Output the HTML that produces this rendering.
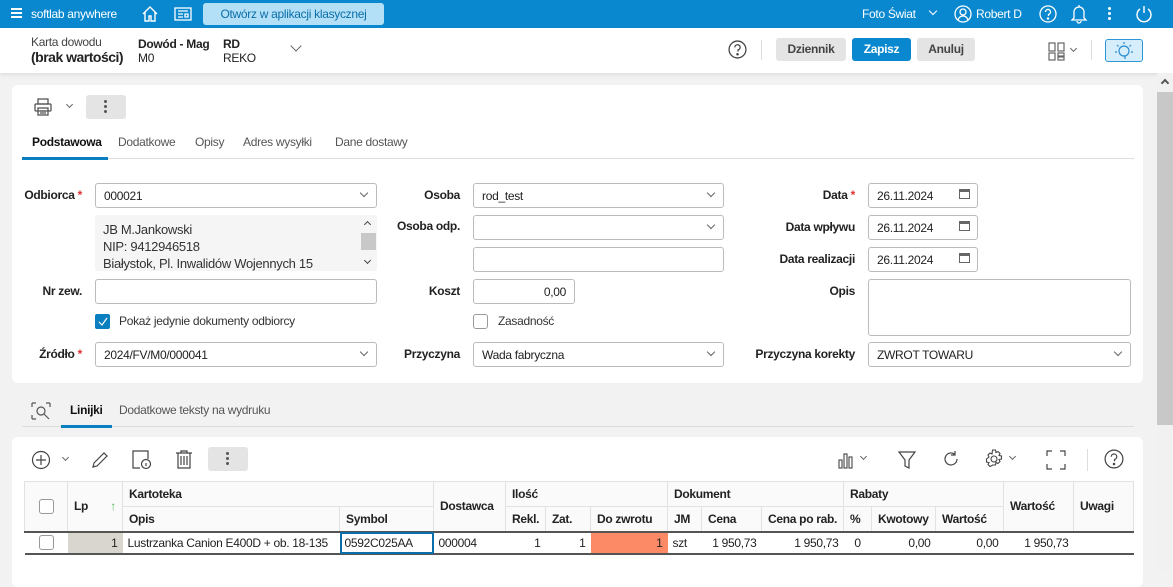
<!DOCTYPE html>
<html><head><meta charset="utf-8"><style>
*{box-sizing:border-box;margin:0;padding:0}
body{width:1173px;height:571px;overflow:hidden;background:#f2f2f2;font-family:"Liberation Sans",sans-serif;font-size:12px;letter-spacing:-0.3px;color:#222;position:relative;white-space:nowrap}
.a{position:absolute}
.top{left:0;top:0;width:1173px;height:28px;background:#0a88cf;color:#fff}
.hdr{left:0;top:28px;width:1173px;height:45px;background:#fff;box-shadow:0 2px 4px rgba(0,0,0,.08)}
.card{background:#fff;border-radius:6px}
.inp{border:1px solid #bbb;border-radius:3px;background:#fff;height:25px;padding:5px 8px;font-size:12px}
.lbl{font-weight:bold;text-align:right;font-size:12px}
.req{color:#d33}
.chev{position:absolute;right:9px;top:6px;width:6px;height:6px;border-right:1px solid #666;border-bottom:1px solid #666;transform:rotate(45deg)}
.btn{border-radius:3px;font-weight:bold;text-align:center;height:23px;line-height:23px;font-size:12px}
.tab{font-size:12px;color:#555}
table{border-collapse:collapse;position:absolute;left:24px;top:481px;font-size:12px;table-layout:fixed;width:1109px}
td,th{border:1px solid #e2e2e2;height:25px;padding:0 6px;text-align:left;font-weight:bold;background:#fafafa;overflow:hidden}
tr.r td{background:#fff;font-weight:normal;height:22px;border:none;border-top:2px solid #555;border-bottom:2px solid #555;padding:0 5px}
.cb{width:15px;height:15px;border:1px solid #999;border-radius:3px;background:#fff;display:inline-block;vertical-align:middle}
</style></head><body>
<div class="a top">
 <div class="a" style="left:11px;top:8px;width:11px;height:2px;background:#fff;box-shadow:0 4px 0 #fff,0 8px 0 #fff"></div>
 <div class="a" style="left:31px;top:7px;font-size:12px">softlab anywhere</div>
 <svg class="a" style="left:140px;top:4px" width="20" height="20" viewBox="0 0 20 20" fill="none" stroke="#fff" stroke-width="1.4"><path d="M3 10L10 3l7 7M5 8v9h4v-5h2v5h4V8"/></svg>
 <svg class="a" style="left:174px;top:6px" width="18" height="16" viewBox="0 0 18 16" fill="none" stroke="#fff" stroke-width="1.3"><rect x="1" y="2" width="16" height="12"/><path d="M4 5h10M4 8h5M4 11h5M11 8h3v3h-3z"/></svg>
 <div class="a" style="left:203px;top:3px;width:181px;height:22px;background:#b3e0f7;border-radius:3px;color:#0a6fa8;text-align:center;line-height:22px;font-size:12px">Otwórz w aplikacji klasycznej</div>
 <div class="a" style="left:862px;top:7px">Foto Świat</div>
 <div class="a" style="left:930px;top:8px;width:6px;height:6px;border-right:1px solid #fff;border-bottom:1px solid #fff;transform:rotate(45deg)"></div>
 <svg class="a" style="left:954px;top:5px" width="18" height="18" viewBox="0 0 18 18" fill="none" stroke="#fff" stroke-width="1.3"><circle cx="9" cy="9" r="8"/><circle cx="9" cy="7" r="3"/><path d="M4 15c1-3 3-4 5-4s4 1 5 4"/></svg>
 <div class="a" style="left:976px;top:7px">Robert D</div>
 <svg class="a" style="left:1039px;top:5px" width="18" height="18" viewBox="0 0 18 18" fill="none" stroke="#fff" stroke-width="1.3"><circle cx="9" cy="9" r="8"/><path d="M6.5 7a2.5 2.5 0 1 1 3 2.4V11"/><circle cx="9" cy="13.5" r=".6" fill="#fff"/></svg>
 <svg class="a" style="left:1070px;top:4px" width="18" height="20" viewBox="0 0 18 20" fill="none" stroke="#fff" stroke-width="1.3"><path d="M4 14V8a5 5 0 0 1 10 0v6l2 2H2zM7 17a2 2 0 0 0 4 0M9 1v2"/></svg>
 <div class="a" style="left:1108px;top:7px;width:3px;height:3px;background:#fff;border-radius:2px;box-shadow:0 5px 0 #fff,0 10px 0 #fff"></div>
 <svg class="a" style="left:1135px;top:5px" width="18" height="18" viewBox="0 0 18 18" fill="none" stroke="#fff" stroke-width="1.4"><path d="M5 4a7 7 0 1 0 8 0M9 1v7"/></svg>
</div>
<div class="a hdr">
 <div class="a" style="left:31px;top:7px;font-size:12px;color:#444">Karta dowodu</div>
 <div class="a" style="left:31px;top:21px;font-size:14px;font-weight:bold;letter-spacing:-0.5px">(brak wartości)</div>
 <div class="a" style="left:138px;top:9px;font-weight:bold">Dowód - Mag</div>
 <div class="a" style="left:138px;top:23px">M0</div>
 <div class="a" style="left:223px;top:9px;font-weight:bold">RD</div>
 <div class="a" style="left:223px;top:23px">REKO</div>
 <div class="chev" style="left:292px;top:14px;width:8px;height:8px"></div>
 <svg class="a" style="left:728px;top:12px" width="19" height="19" viewBox="0 0 18 18" fill="none" stroke="#444" stroke-width="1.2"><circle cx="9" cy="9" r="8"/><path d="M6.5 7a2.5 2.5 0 1 1 3 2.4V11"/><circle cx="9" cy="13.5" r=".6" fill="#444"/></svg>
 <div class="a" style="left:761px;top:12px;width:1px;height:20px;background:#ddd"></div>
 <div class="a btn" style="left:776px;top:10px;width:70px;background:#e4e4e4;color:#444">Dziennik</div>
 <div class="a btn" style="left:852px;top:10px;width:59px;background:#0a88cf;color:#fff">Zapisz</div>
 <div class="a btn" style="left:917px;top:10px;width:58px;background:#e4e4e4;color:#444">Anuluj</div>
 <svg class="a" style="left:1048px;top:14px" width="18" height="20" viewBox="0 0 18 20" fill="none" stroke="#666" stroke-width="1.2"><rect x="1" y="1" width="6" height="8"/><rect x="10" y="1" width="6" height="8"/><rect x="1" y="11" width="6" height="7"/><rect x="10" y="11" width="6" height="3"/><rect x="10" y="15" width="6" height="3"/></svg>
 <div class="chev" style="left:1071px;top:18px;width:5px;height:5px"></div>
 <div class="a" style="left:1091px;top:12px;width:1px;height:20px;background:#ddd"></div>
 <div class="a" style="left:1105px;top:11px;width:38px;height:23px;border:1px solid #2a96d4;background:#d6eefb;border-radius:3px"></div>
 <svg class="a" style="left:1114px;top:13px" width="20" height="20" viewBox="0 0 20 20" fill="none" stroke="#2a8ccc" stroke-width="1.2"><circle cx="10" cy="10" r="5"/><path d="M10 1v2M3 4l1.5 1.5M17 4l-1.5 1.5M1 11h2M17 11h2M9 15h2v3"/></svg>
</div>
<div class="a" style="left:1157px;top:73px;width:16px;height:498px;background:#f1f1f1"></div>
<div class="a" style="left:1157px;top:92px;width:16px;height:333px;background:#c8c8c8"></div>
<div class="a" style="left:1162px;top:80px;width:6px;height:6px;border-left:2px solid #555;border-top:2px solid #555;transform:rotate(45deg)"></div>

<div class="a card" style="left:12px;top:85px;width:1131px;height:298px">
 <svg class="a" style="left:21px;top:12px" width="20" height="20" viewBox="0 0 20 20" fill="none" stroke="#555" stroke-width="1.3"><rect x="5" y="2" width="10" height="5"/><rect x="2" y="7" width="16" height="7" rx="1"/><rect x="5" y="11" width="10" height="7"/><path d="M7 14h6M7 16h6"/></svg>
 <div class="chev" style="left:55px;top:17px;width:5px;height:5px"></div>
 <div class="a" style="left:74px;top:10px;width:40px;height:24px;background:#e4e4e4;border-radius:3px"></div>
 <div class="a" style="left:92px;top:15px;width:3px;height:3px;background:#555;border-radius:2px;box-shadow:0 5px 0 #555,0 10px 0 #555"></div>
 <div class="a tab" style="left:20px;top:50px;color:#111;font-weight:bold">Podstawowa</div>
 <div class="a tab" style="left:106px;top:50px">Dodatkowe</div>
 <div class="a tab" style="left:183px;top:50px">Opisy</div>
 <div class="a tab" style="left:231px;top:50px">Adres wysyłki</div>
 <div class="a tab" style="left:323px;top:50px">Dane dostawy</div>
 <div class="a" style="left:10px;top:73px;width:1112px;height:1px;background:#ddd"></div>
 <div class="a" style="left:10px;top:72px;width:86px;height:3px;background:#0a7fc0"></div>

 <div class="a lbl" style="left:0;top:103px;width:70px">Odbiorca <span class="req">*</span></div>
 <div class="a inp" style="left:83px;top:98px;width:282px">000021<div class="chev"></div></div>
 <div class="a" style="left:83px;top:130px;width:282px;height:56px;background:#f5f5f5;border-radius:3px;padding:6px 8px;line-height:17px;font-size:13px;color:#333">JB M.Jankowski<br>NIP: 9412946518<br>Białystok, Pl. Inwalidów Wojennych 15</div>
 <div class="a" style="left:349px;top:148px;width:15px;height:17px;background:#c8c8c8"></div>
 <div class="a" style="left:353px;top:137px;width:5px;height:5px;border-left:1.5px solid #444;border-top:1.5px solid #444;transform:rotate(45deg)"></div>
 <div class="a" style="left:353px;top:173px;width:5px;height:5px;border-right:1.5px solid #444;border-bottom:1.5px solid #444;transform:rotate(45deg)"></div>
 <div class="a lbl" style="left:0;top:199px;width:70px">Nr zew.</div>
 <div class="a inp" style="left:83px;top:194px;width:282px"></div>
 <div class="a" style="left:83px;top:229px;width:15px;height:15px;background:#0a7fc0;border-radius:2px"></div>
 <svg class="a" style="left:86px;top:232px" width="10" height="9"><path d="M1 5l3 3 5-7" stroke="#fff" fill="none" stroke-width="1.2"/></svg>
 <div class="a" style="left:107px;top:229px;color:#333">Pokaż jedynie dokumenty odbiorcy</div>
 <div class="a lbl" style="left:0;top:262px;width:70px">Źródło <span class="req">*</span></div>
 <div class="a inp" style="left:83px;top:257px;width:282px">2024/FV/M0/000041<div class="chev"></div></div>

 <div class="a lbl" style="left:350px;top:103px;width:98px">Osoba</div>
 <div class="a inp" style="left:461px;top:98px;width:251px">rod_test<div class="chev"></div></div>
 <div class="a lbl" style="left:350px;top:134px;width:98px">Osoba odp.</div>
 <div class="a inp" style="left:461px;top:130px;width:251px"><div class="chev"></div></div>
 <div class="a inp" style="left:461px;top:162px;width:251px"></div>
 <div class="a lbl" style="left:350px;top:199px;width:98px">Koszt</div>
 <div class="a inp" style="left:461px;top:194px;width:102px;text-align:right">0,00</div>
 <div class="a" style="left:461px;top:229px;width:15px;height:15px;border:1px solid #999;border-radius:3px"></div>
 <div class="a" style="left:486px;top:229px;color:#333">Zasadność</div>
 <div class="a lbl" style="left:350px;top:262px;width:98px">Przyczyna</div>
 <div class="a inp" style="left:461px;top:257px;width:251px">Wada fabryczna<div class="chev"></div></div>

 <div class="a lbl" style="left:700px;top:103px;width:143px">Data <span class="req">*</span></div>
 <div class="a lbl" style="left:700px;top:135px;width:143px">Data wpływu</div>
 <div class="a lbl" style="left:700px;top:167px;width:143px">Data realizacji</div>
 <div class="a inp" style="left:856px;top:98px;width:110px">26.11.2024</div>
 <div class="a inp" style="left:856px;top:130px;width:110px">26.11.2024</div>
 <div class="a inp" style="left:856px;top:162px;width:110px">26.11.2024</div>
 <div class="a" style="left:947px;top:104px;width:11px;height:10px;border:1px solid #666;border-top-width:3px"></div>
 <div class="a" style="left:947px;top:136px;width:11px;height:10px;border:1px solid #666;border-top-width:3px"></div>
 <div class="a" style="left:947px;top:168px;width:11px;height:10px;border:1px solid #666;border-top-width:3px"></div>
 <div class="a lbl" style="left:700px;top:199px;width:143px">Opis</div>
 <div class="a inp" style="left:856px;top:194px;width:263px;height:57px"></div>
 <div class="a lbl" style="left:700px;top:262px;width:143px">Przyczyna korekty</div>
 <div class="a inp" style="left:856px;top:257px;width:263px">ZWROT TOWARU<div class="chev"></div></div>
</div>

<svg class="a" style="left:31px;top:402px" width="20" height="18" viewBox="0 0 20 18" fill="none" stroke="#555" stroke-width="1.2"><path d="M1 1h4M1 1v4M15 1h4M19 1v4M1 17h4M1 13v4"/><circle cx="10" cy="9" r="4"/><path d="M13 12l5 5"/></svg>
<div class="a tab" style="left:70px;top:403px;color:#111;font-weight:bold">Linijki</div>
<div class="a tab" style="left:119px;top:403px">Dodatkowe teksty na wydruku</div>
<div class="a" style="left:22px;top:426px;width:1112px;height:1px;background:#ddd"></div>
<div class="a" style="left:61px;top:425px;width:51px;height:3px;background:#0a7fc0"></div>

<div class="a card" style="left:12px;top:437px;width:1131px;height:150px"></div>
<svg class="a" style="left:31px;top:450px" width="20" height="20" viewBox="0 0 20 20" fill="none" stroke="#444" stroke-width="1.2"><circle cx="10" cy="10" r="8.5"/><path d="M10 5v10M5 10h10"/></svg>
<div class="a" style="left:63px;top:455px;width:5px;height:5px;border-right:1px solid #666;border-bottom:1px solid #666;transform:rotate(45deg)"></div>
<svg class="a" style="left:90px;top:450px" width="20" height="20" viewBox="0 0 20 20" fill="none" stroke="#444" stroke-width="1.2"><path d="M3 17l1-4L14 3l3 3L7 16z"/></svg>
<svg class="a" style="left:131px;top:449px" width="22" height="22" viewBox="0 0 22 22" fill="none" stroke="#444" stroke-width="1.2"><path d="M9 19H2V2h15v8"/><circle cx="15" cy="15" r="4.5"/><path d="M15 14v3"/></svg>
<svg class="a" style="left:174px;top:449px" width="20" height="20" viewBox="0 0 20 20" fill="none" stroke="#444" stroke-width="1.2"><path d="M2 4h16M7 4V2h6v2M4 4v15h12V4M7 7v9M10 7v9M13 7v9"/></svg>
<div class="a" style="left:208px;top:447px;width:40px;height:24px;background:#e4e4e4;border-radius:3px"></div>
<div class="a" style="left:226px;top:452px;width:3px;height:3px;background:#555;border-radius:2px;box-shadow:0 5px 0 #555,0 10px 0 #555"></div>
<svg class="a" style="left:837px;top:450px" width="20" height="20" viewBox="0 0 20 20" fill="none" stroke="#444" stroke-width="1.1"><rect x="2" y="10" width="3" height="8"/><rect x="7" y="4" width="3" height="14"/><rect x="12" y="7" width="3" height="11"/></svg>
<div class="a" style="left:861px;top:454px;width:5px;height:5px;border-right:1px solid #666;border-bottom:1px solid #666;transform:rotate(45deg)"></div>
<svg class="a" style="left:897px;top:450px" width="20" height="20" viewBox="0 0 20 20" fill="none" stroke="#444" stroke-width="1.2"><path d="M2 2h16l-6 8v8l-4-2v-6z"/></svg>
<svg class="a" style="left:942px;top:450px" width="18" height="18" viewBox="0 0 18 18" fill="none" stroke="#444" stroke-width="1.2"><path d="M15 9a6 6 0 1 1-2-4.5M13 1v4h-4"/></svg>
<svg class="a" style="left:984px;top:449px" width="20" height="20" viewBox="0 0 20 20" fill="none" stroke="#444" stroke-width="1.1"><circle cx="10" cy="10" r="3"/><path d="M8.5 1h3l.5 2.5 2-1 2 2-1 2 2.5.5v3l-2.5.5 1 2-2 2-2-1-.5 2.5h-3L8 16.5l-2 1-2-2 1-2-2.5-.5v-3L5 8 4 6l2-2 2 1z"/></svg>
<div class="a" style="left:1010px;top:454px;width:5px;height:5px;border-right:1px solid #666;border-bottom:1px solid #666;transform:rotate(45deg)"></div>
<svg class="a" style="left:1046px;top:450px" width="20" height="20" viewBox="0 0 20 20" fill="none" stroke="#444" stroke-width="1.2"><path d="M1 6V1h5M14 1h5v5M19 14v5h-5M6 19H1v-5"/></svg>
<div class="a" style="left:1087px;top:449px;width:1px;height:22px;background:#ddd"></div>
<svg class="a" style="left:1104px;top:449px" width="20" height="20" viewBox="0 0 18 18" fill="none" stroke="#444" stroke-width="1.1"><circle cx="9" cy="9" r="8"/><path d="M6.5 7a2.5 2.5 0 1 1 3 2.4V11"/><circle cx="9" cy="13.5" r=".6" fill="#444"/></svg>

<table>
<colgroup><col style="width:43px"><col style="width:55px"><col style="width:217px"><col style="width:94px"><col style="width:72px"><col style="width:40px"><col style="width:45px"><col style="width:77px"><col style="width:34px"><col style="width:60px"><col style="width:82px"><col style="width:28px"><col style="width:64px"><col style="width:68px"><col style="width:70px"><col style="width:60px"></colgroup>
<tr><th rowspan="2" style="text-align:center"><span class="cb"></span></th><th rowspan="2">Lp <span style="color:#5b5;float:right">↑</span></th><th colspan="2">Kartoteka</th><th rowspan="2">Dostawca</th><th colspan="3">Ilość</th><th colspan="3">Dokument</th><th colspan="3">Rabaty</th><th rowspan="2">Wartość</th><th rowspan="2">Uwagi</th></tr>
<tr><th>Opis</th><th>Symbol</th><th>Rekl.</th><th>Zat.</th><th>Do zwrotu</th><th>JM</th><th>Cena</th><th>Cena po rab.</th><th>%</th><th>Kwotowy</th><th>Wartość</th></tr>
<tr class="r"><td style="text-align:center"><span class="cb"></span></td><td style="background:#d9d6cf;text-align:right">1</td><td>Lustrzanka Canion E400D + ob. 18-135</td><td style="outline:2px solid #0a6fa8;outline-offset:-2px">0592C025AA</td><td>000004</td><td style="text-align:right">1</td><td style="text-align:right">1</td><td style="text-align:right;background:#fd8a66">1</td><td>szt</td><td style="text-align:right">1 950,73</td><td style="text-align:right">1 950,73</td><td style="text-align:center">0</td><td style="text-align:right">0,00</td><td style="text-align:right">0,00</td><td style="text-align:right">1 950,73</td><td></td></tr>
</table>
</body></html>
